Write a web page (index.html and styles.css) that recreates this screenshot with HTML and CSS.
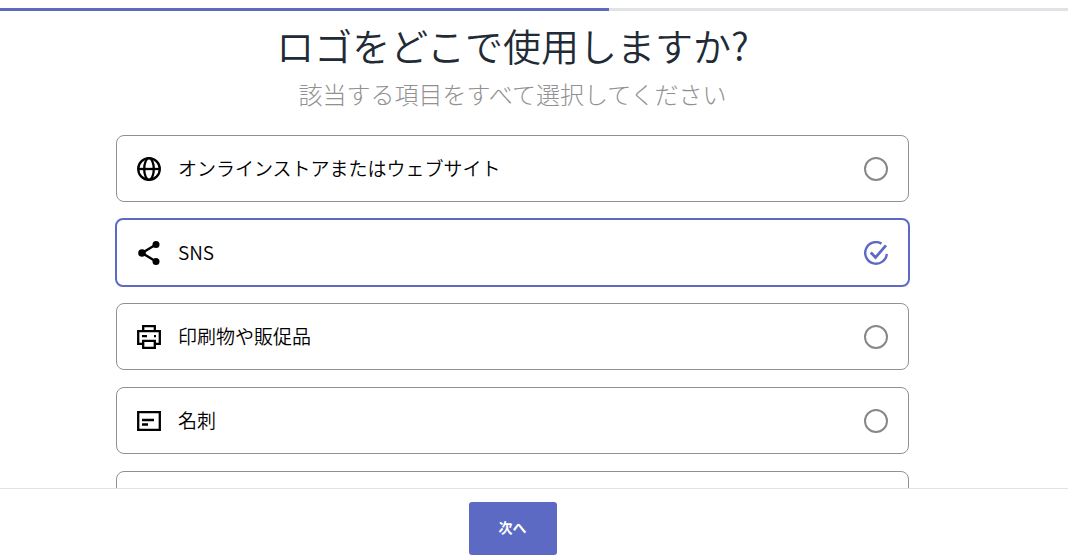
FILE: index.html
```html
<!DOCTYPE html>
<html lang="ja">
<head>
  <meta charset="UTF-8" />
  <meta name="viewport" content="width=device-width, initial-scale=1" />
  <title>ロゴをどこで使用しますか?</title>
  <link rel="stylesheet" href="styles.css">
</head>
<body>
  <div class="progress"><div class="progress-bar" style="width: 57%"></div></div>

  <form class="survey">
    <main class="content">
      <h1>ロゴをどこで使用しますか?</h1>
      <p class="subtitle">該当する項目をすべて選択してください</p>

      <div class="options">
        <label class="option">
          <svg class="icon" viewBox="0 0 24 24" fill="none" stroke="currentColor" stroke-width="2.300">
            <circle cx="12" cy="12" r="10.8" />
            <ellipse cx="12" cy="12" rx="4.8" ry="10.8" />
            <path d="M1 12h22" />
          </svg>
          <span class="name">オンラインストアまたはウェブサイト</span>
          <span class="check">
            <input type="checkbox" name="usage" value="web" />
          </span>
        </label>

        <label class="option selected">
          <svg class="icon" viewBox="0 0 24 24" fill="currentColor">
            <path d="M19 3.500L5 12l14 8.500" fill="none" stroke="currentColor" stroke-width="2.400" />
            <circle cx="19" cy="3.500" r="3.500" />
            <circle cx="5" cy="12" r="3.800" />
            <circle cx="19" cy="20.500" r="3.500" />
          </svg>
          <span class="name">SNS</span>
          <span class="check">
            <input type="checkbox" name="usage" value="sns" checked />
            <svg class="tick" viewBox="0 0 24 24" fill="none" stroke="currentColor" stroke-width="2.400">
              <path d="M17.500 2.600A10.800 10.800 0 1 0 22.800 12.800" />
              <path d="M6.800 11.500l4.700 5L22 4.300" stroke-width="2.800" />
            </svg>
          </span>
        </label>

        <label class="option">
          <svg class="icon" viewBox="0 0 24 24" fill="none" stroke="currentColor" stroke-width="2.300">
            <path d="M6.200 6V1.200h11.600V6" />
            <path d="M6 18.800H1.200V6.200h21.600v12.600H18" />
            <path d="M6.200 15.800h11.600v7H6.200z" />
            <path d="M5 11.200h5M17 11.200h2" />
          </svg>
          <span class="name">印刷物や販促品</span>
          <span class="check">
            <input type="checkbox" name="usage" value="print" />
          </span>
        </label>

        <label class="option">
          <svg class="icon" viewBox="0 0 24 24" fill="none" stroke="currentColor" stroke-width="2.300">
            <path d="M1.200 3.200h21.600v17.600H1.200z" />
            <path d="M5 11h12M5 15.500h6" />
          </svg>
          <span class="name">名刺</span>
          <span class="check">
            <input type="checkbox" name="usage" value="card" />
          </span>
        </label>

        <div class="option"></div>
      </div>
    </main>

    <footer class="footer">
      <button type="submit">次へ</button>
    </footer>
  </form>
</body>
</html>
```
FILE: styles.css
```css
* {
  box-sizing: border-box;
}
body {
  margin: 0;
  padding-top: 8px;
  height: 100vh;
  display: flex;
  flex-direction: column;
  background: #fff;
  color: #000;
  font-family: "Noto Sans CJK JP", sans-serif;
}
.progress {
  flex: none;
  height: 3px;
  background: #dfe3e8;
}
.progress-bar {
  height: 100%;
  background: #5c6ac4;
}
.survey {
  flex: 1;
  min-height: 0;
  display: flex;
  flex-direction: column;
}
.content {
  flex: 1;
  min-height: 0;
  overflow: hidden;
  padding: 10px 159px 0 116px;
}
h1,
.name {
  font-family: "Noto Sans CJK JP DemiLight", "Noto Sans CJK JP", sans-serif;
  font-weight: 350;
}
h1 {
  margin: 0;
  color: #212b36;
  font-size: 38px;
  line-height: 48px;
  text-align: center;
}
.subtitle {
  margin: 9px 0 25px;
  color: #919191;
  font-size: 24px;
  font-weight: 300;
  line-height: 32px;
  text-align: center;
}
.options {
  display: flex;
  flex-direction: column;
  gap: 17px;
}
.option {
  display: flex;
  align-items: center;
  gap: 17px;
  height: 67px;
  padding: 0 20px;
  border: 1px solid #919191;
  border-radius: 8px;
  cursor: pointer;
}
.option.selected {
  height: 69px;
  margin: -1px;
  border: 2px solid #5c6ac4;
}
.icon {
  flex: none;
  width: 24px;
  height: 24px;
}
.name {
  flex: 1;
  padding-bottom: 2px;
  font-size: 19px;
  line-height: 28px;
}
.check {
  display: grid;
  width: 24px;
  height: 24px;
}
.check input,
.tick {
  grid-area: 1 / 1;
  width: 24px;
  height: 24px;
  margin: 0;
}
.check input {
  appearance: none;
  border: 2px solid #888;
  border-radius: 50%;
  cursor: pointer;
}
.check input:checked {
  border-color: transparent;
}
.tick {
  color: #5c6ac4;
  pointer-events: none;
}
.footer {
  flex: none;
  display: flex;
  justify-content: center;
  padding: 13px 43px 5px 0;
  border-top: 1px solid #dfe3e8;
}
button {
  padding: 15px 30px 17px;
  border: none;
  border-radius: 3px;
  background: #5c6ac4;
  color: #fff;
  font-family: inherit;
  font-size: 14px;
  font-weight: 700;
  line-height: 21px;
  cursor: pointer;
}
```
